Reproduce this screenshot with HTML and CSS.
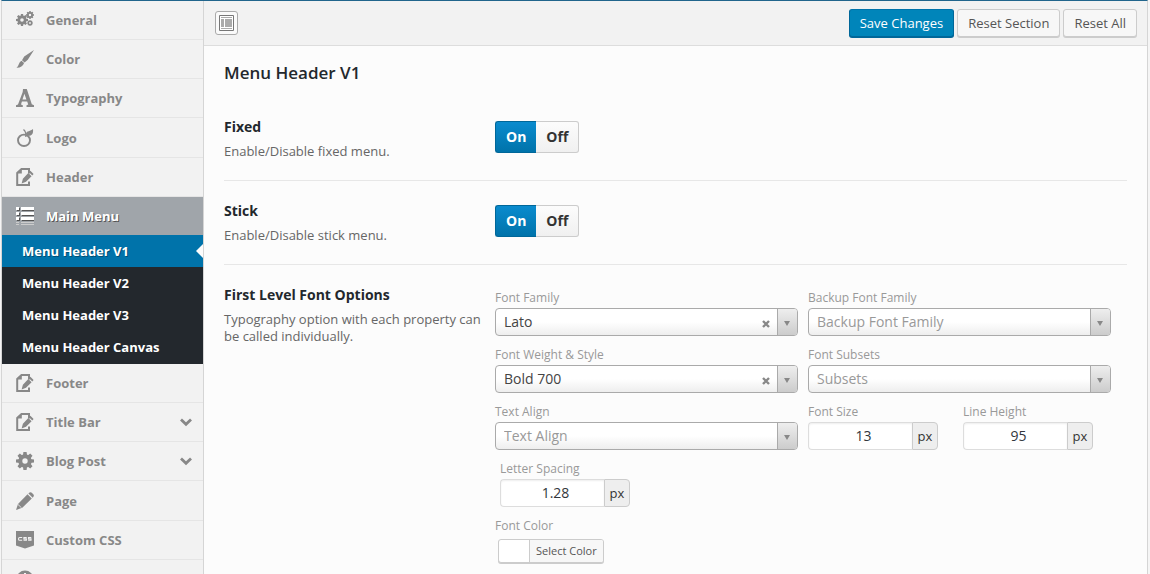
FILE: index.html
```html
<!DOCTYPE html>
<html lang="en">
<head>
<meta charset="utf-8">
<title>Theme Options</title>
<link rel="stylesheet" href="styles.css">
</head>
<body>
<svg class="sprite" aria-hidden="true">
  <symbol id="i-gear" viewBox="0 0 18 18">
    <circle cx="9" cy="9" r="4.7" fill="none" stroke="currentColor" stroke-width="4"/>
    <path fill="currentColor" d="M7.4 0h3.2l.5 4H6.9zM7.4 18h3.2l.5-4H6.9zM0 7.4v3.2l4 .5V6.9zM18 7.4v3.2l-4 .5V6.9zM1.5 3.8l2.3-2.3 3.2 2.4L3.900 7zM16.500 14.200l-2.300 2.300-3.200-2.400L14.100 11zM14.200 1.500l2.300 2.300L14.100 7 11 3.900zM3.800 16.500l-2.300-2.300L3.900 11 7 14.100z"/>
  </symbol>
  <symbol id="i-edit" viewBox="0 0 18 18">
    <path d="M13 5.500V1H5.500L1.200 5v12H13v-3.500" fill="none" stroke="currentColor" stroke-width="2"/>
    <path d="M1 5.500h4.800V1z" fill="currentColor"/>
    <path d="M14.400 2.800l3.200 3.100-1.300 1.600-3.300-3.200zM12.300 5l3.300 3.200-5.600 5.500-4.400 1.700 1.300-4.700z" fill="currentColor"/>
  </symbol>
  <symbol id="i-down" viewBox="0 0 12 9">
    <path d="M1 1.500l5 4.800 5-4.800" fill="none" stroke="currentColor" stroke-width="2.800"/>
  </symbol>
</svg>
<div class="page">
  <nav class="sidebar" aria-label="Sections">
    <ul class="menu">
      <li><a href="#general"><svg class="icon" viewBox="0 0 18 18"><use href="#i-gear" x="0" y="3" width="12" height="12"/><use href="#i-gear" x="10" y="0" width="8" height="8"/><use href="#i-gear" x="11" y="9" width="6" height="6"/></svg>General</a></li>
      <li><a href="#color"><svg class="icon" viewBox="0 0 18 18" fill="currentColor"><path d="M18 0L8.200 6.600 6 10.200l2.600 2.300 3.200-2.800zM5.500 10.700l2.600 2.400C7 16.500 4 18 .5 17.800 3 16 2.500 12.500 5.500 10.700z"/></svg>Color</a></li>
      <li><a href="#typography"><svg class="icon" viewBox="0 0 18 18" fill="currentColor" fill-rule="evenodd"><path d="M7 0h3.800l5 15.300 2.200.9V18h-7.500v-1.700l1.700-.8-1-3H5.900L5 15.400l1.800.9V18H0v-1.700l2-.9L6.700 3zM8.400 4.800L6.500 10.600h3.900z"/></svg>Typography</a></li>
      <li class="group"><a href="#logo"><svg class="icon" viewBox="0 0 18 18"><ellipse cx="8" cy="11.300" rx="6" ry="5.700" fill="none" stroke="currentColor" stroke-width="1.900"/><path d="M7.500.500Q10.500 3 9.800 8" fill="none" stroke="currentColor" stroke-width="1.300"/><path d="M17 0c.6 5-1.500 7.200-4.800 6.700L9.900 5C10.500 1.500 14.500 2.500 17 0z" fill="currentColor"/></svg>Logo</a></li>
      <li><a href="#header"><svg class="icon"><use href="#i-edit"/></svg>Header</a></li>
      <li>
        <a class="current" href="#main-menu"><svg class="icon" viewBox="0 0 18 18"><path fill="#555" d="M1 1h3v3H1zM6 1h13v3H6zM1 6h3v3H1zM6 6h13v3H6zM1 11h3v3H1zM6 11h13v3H6z"/><path fill="#fff" d="M0 0h3v3H0zM5 0h13v3H5zM0 5h3v3H0zM5 5h13v3H5zM0 10h3v3H0zM5 10h13v3H5z"/><path fill="none" stroke="#ccc" d="M0 15.500h3M5 15.500h13M0 17.500h3M5 17.500h13"/></svg>Main Menu</a>
        <ul class="submenu">
          <li><a class="active" href="#v1">Menu Header V1</a></li>
          <li><a href="#v2">Menu Header V2</a></li>
          <li><a href="#v3">Menu Header V3</a></li>
          <li><a href="#canvas">Menu Header Canvas</a></li>
        </ul>
      </li>
      <li><a href="#footer"><svg class="icon"><use href="#i-edit"/></svg>Footer</a></li>
      <li><a href="#title-bar"><svg class="icon"><use href="#i-edit"/></svg>Title Bar<svg class="chevron"><use href="#i-down"/></svg></a></li>
      <li><a href="#blog-post"><svg class="icon"><use href="#i-gear"/></svg>Blog Post<svg class="chevron"><use href="#i-down"/></svg></a></li>
      <li class="group"><a href="#page"><svg class="icon" viewBox="0 0 18 18" fill="currentColor"><path d="M11.500 2.200l4.300 4.200L6.300 15.800 0 18l2-6.100zM12.400 1.500C14 0 15 0 16.300 1.200l.7.700c1.300 1.300 1.200 2.300-.3 3.800z"/><path d="M2 12.500l3.500 3.300" stroke="#f2f2f2" stroke-width=".8"/></svg>Page</a></li>
      <li><a href="#css"><svg class="icon" viewBox="0 0 18 18"><path fill="currentColor" d="M0 0h18v14.500L9 17.500l-9-3z"/><path fill="none" stroke="#f2f2f2" stroke-width="1.100" d="M6.200 6.500H3.800q-1.300 0-1.300 1.400t1.300 1.400h2.400M10.700 6.500H7.900v1.400h2.500v1.400H7.500M15.300 6.500h-2.800v1.400H15v1.400h-2.900"/></svg>Custom CSS</a></li>
      <li><a href="#more" aria-label="More"><svg class="icon" viewBox="0 0 18 18"><circle cx="9" cy="9" r="8.500" fill="currentColor"/><path fill="#f2f2f2" d="M8 3h2v2H8zM8 7h2v7H8z"/></svg></a></li>
    </ul>
  </nav>
  <main class="main">
    <header class="toolbar">
      <button class="expand" type="button" aria-label="Expand options">
        <svg viewBox="0 0 15 16"><path fill="#fff" stroke="#777" d="M.5.500h14v15H.5z"/><path fill="#aaa" d="M2 2h11v1H2zM2 4h3v8H2zM6 4h7v8H6zM2 13h11v1H2z"/></svg>
      </button>
      <div class="actions">
        <button class="btn primary" type="button">Save Changes</button>
        <button class="btn" type="button">Reset Section</button>
        <button class="btn" type="button">Reset All</button>
      </div>
    </header>
    <form class="content">
      <h1>Menu Header V1</h1>
      <section class="option">
        <div class="info"><h2>Fixed</h2><p>Enable/Disable fixed menu.</p></div>
        <div class="switch">
          <label><input type="radio" name="fixed" checked><span>On</span></label>
          <label><input type="radio" name="fixed"><span>Off</span></label>
        </div>
      </section>
      <section class="option">
        <div class="info"><h2>Stick</h2><p>Enable/Disable stick menu.</p></div>
        <div class="switch">
          <label><input type="radio" name="stick" checked><span>On</span></label>
          <label><input type="radio" name="stick"><span>Off</span></label>
        </div>
      </section>
      <section class="option">
        <div class="info"><h2>First Level Font Options</h2><p>Typography option with each property can be called individually.</p></div>
        <div class="fields">
          <div class="field">
            <label for="family">Font Family</label>
            <div class="select"><select id="family"><option>Lato</option></select><button class="clear" type="button" aria-label="Clear font family"><svg viewBox="0 0 8 8"><path d="M1 1l6 6M7 1L1 7"/></svg></button></div>
          </div>
          <div class="field">
            <label for="backup">Backup Font Family</label>
            <div class="select"><select class="empty" id="backup"><option>Backup Font Family</option></select></div>
          </div>
          <div class="field">
            <label for="weight">Font Weight &amp; Style</label>
            <div class="select"><select id="weight"><option>Bold 700</option></select><button class="clear" type="button" aria-label="Clear font weight"><svg viewBox="0 0 8 8"><path d="M1 1l6 6M7 1L1 7"/></svg></button></div>
          </div>
          <div class="field">
            <label for="subsets">Font Subsets</label>
            <div class="select"><select class="empty" id="subsets"><option>Subsets</option></select></div>
          </div>
          <div class="field">
            <label for="align">Text Align</label>
            <div class="select"><select class="empty" id="align"><option>Text Align</option></select></div>
          </div>
          <div class="pair">
            <div class="field">
              <label for="size">Font Size</label>
              <div class="unit"><input id="size" type="text" value="13"><span>px</span></div>
            </div>
            <div class="field">
              <label for="line">Line Height</label>
              <div class="unit"><input id="line" type="text" value="95"><span>px</span></div>
            </div>
          </div>
          <div class="field spacing">
            <label for="spacing">Letter Spacing</label>
            <div class="unit"><input id="spacing" type="text" value="1.28"><span>px</span></div>
          </div>
          <div class="field color">
            <label for="color">Font Color</label>
            <button class="picker" id="color" type="button"><span>Select Color</span></button>
          </div>
        </div>
      </section>
    </form>
  </main>
</div>
</body>
</html>
```
FILE: styles.css
```css
* { box-sizing: border-box; }

body {
  margin: 0;
  background: #f5f5f5;
  color: #555;
  font: 13px/18px "Open Sans", sans-serif;
}

button, input, select { font-family: inherit; }
ul { list-style: none; margin: 0; padding: 0; }
h1, h2, p { margin: 0; }
.sprite { display: none; }

.page {
  display: flex;
  height: 100vh;
  margin: 0 2px 0 1px;
  overflow: hidden;
  border: 1px solid #d5d5d5;
  border-top-color: #21658c;
  border-bottom: 0;
  background: #fcfcfc;
}

/* Sidebar */
.sidebar {
  flex: none;
  width: 202px;
  border-right: 1px solid #d5d5d5;
  background: #f2f2f2;
}

.menu > li > a {
  display: flex;
  align-items: center;
  gap: 12px;
  height: 39px;
  padding: 0 11px 0 14px;
  border-bottom: 1px solid #e5e5e5;
  color: #888;
  font-weight: 700;
  text-decoration: none;
}

.icon { flex: none; width: 18px; height: 18px; }
.chevron { width: 12px; height: 9px; margin-left: auto; }

.menu > .group { padding-top: 1px; }

.menu > li > .current {
  height: 38px;
  border-bottom: 0;
  background: #a0a5aa;
  color: #fff;
  text-shadow: 1px 1px #555;
}

.submenu { padding-bottom: 1px; background: #23282d; }

.submenu a {
  display: block;
  position: relative;
  padding: 0 20px;
  color: #fff;
  font-weight: 700;
  line-height: 32px;
  text-decoration: none;
}

.submenu .active { background: #0073aa; text-shadow: 1px 1px #004f75; }

.submenu .active::after {
  content: "";
  position: absolute;
  top: 9px;
  right: 0;
  border: 7px solid transparent;
  border-right-color: #fcfcfc;
  border-left: 0;
}

/* Toolbar */
.main { flex: 1; min-width: 0; }

.toolbar {
  display: flex;
  align-items: center;
  justify-content: space-between;
  height: 45px;
  padding: 0 10px 0 11px;
  border-bottom: 1px solid #ddd;
  background: #f2f2f2;
}

.expand {
  display: grid;
  place-items: center;
  width: 23px;
  height: 24px;
  padding: 0;
  border: 1px solid #aaa;
  border-radius: 3px;
  background: #fafafa;
}

.expand svg { width: 15px; height: 16px; }
.actions { display: flex; gap: 3px; }

.btn {
  height: 28px;
  padding: 0 10px;
  border: 1px solid #ccc;
  border-radius: 3px;
  background: #f7f7f7;
  box-shadow: 0 1px 0 #ccc;
  color: #555;
  font-size: 13px;
}

.btn.primary {
  border-color: #0073aa #006799 #006799;
  background: #0085ba;
  box-shadow: 0 1px 0 #006799;
  color: #fff;
}

/* Options */
.content { padding: 15px 20px 0; }

h1 { padding-bottom: 12px; color: #23282d; font-size: 17px; font-weight: 600; line-height: 24px; }

.option {
  display: flex;
  align-items: flex-start;
  min-height: 84px;
  border-bottom: 1px solid #e7e7e7;
}

.option:last-child { border-bottom: 0; }

.info { flex: none; width: 271px; padding: 20px 10px 0 0; }
h2 { color: #23282d; font-size: 14px; font-weight: 700; line-height: 19px; }
.info p { padding-top: 7px; color: #666; line-height: 17px; }

.switch { display: flex; padding-top: 24px; }
.switch label { position: relative; }
.switch input { position: absolute; opacity: 0; }

.switch span {
  display: block;
  padding: 0 10px;
  border: 1px solid #ccc;
  border-left: 0;
  border-radius: 0 3px 3px 0;
  background: linear-gradient(#fcfcfc, #f0f0f0);
  color: #333;
  font-size: 14px;
  font-weight: 700;
  line-height: 30px;
}

.switch label:first-child span {
  border: 1px solid #006799;
  border-right: 0;
  border-radius: 3px 0 0 3px;
}

.switch :checked + span { background: linear-gradient(#0a8bce, #0073aa); color: #fff; }

.fields {
  flex: 1;
  display: grid;
  grid-template-columns: 1fr 1fr;
  gap: 9px 10px;
  padding: 23px 16px 0 0;
}

.field > label { display: block; color: #999; font-size: 12px; line-height: 20px; }
.select { position: relative; }

.select select {
  display: block;
  width: 100%;
  height: 28px;
  padding: 0 40px 2px 8px;
  appearance: none;
  border: 1px solid #aaa;
  border-radius: 4px;
  background: linear-gradient(#fff 50%, #eee);
  color: #444;
  font-size: 14px;
}

.select .empty { color: #999; }

.select::before {
  content: "";
  position: absolute;
  inset: 1px 1px 1px auto;
  width: 19px;
  border-left: 1px solid #aaa;
  border-radius: 0 3px 3px 0;
  background: linear-gradient(#eee, #ccc);
  pointer-events: none;
}

.select::after {
  content: "";
  position: absolute;
  top: 13px;
  right: 8px;
  border: 3px solid transparent;
  border-top: 5px solid #888;
  border-bottom: 0;
  pointer-events: none;
}

.clear {
  display: grid;
  place-items: center;
  position: absolute;
  top: 10px;
  right: 26px;
  width: 12px;
  height: 12px;
  padding: 0;
  border: 0;
  background: none;
}

.clear svg { width: 8px; height: 8px; fill: none; stroke: #888; stroke-width: 2.400; }

.pair { display: flex; gap: 25px; }
.unit { display: flex; width: 130px; }

.unit input {
  flex: 1;
  min-width: 0;
  height: 28px;
  padding: 0 8px 2px 14px;
  border: 1px solid #ddd;
  border-right: 0;
  border-radius: 4px 0 0 4px;
  background: #fff;
  box-shadow: inset 0 1px 2px #eee;
  color: #32373c;
  font-size: 14px;
  text-align: center;
}

.unit span {
  width: 26px;
  border: 1px solid #ccc;
  border-radius: 0 4px 4px 0;
  background: #eee;
  color: #333;
  line-height: 26px;
  text-align: center;
}

.spacing { grid-column: 1 / -1; padding-left: 5px; }
.color { grid-column: 1 / -1; }

.picker {
  display: block;
  height: 24px;
  margin: 3px;
  padding: 0 0 0 30px;
  overflow: hidden;
  border: 1px solid #ccc;
  border-radius: 3px;
  background: #fff;
  box-shadow: 0 1px 0 #ccc;
  color: #555;
  font-size: 11px;
}

.picker span {
  display: block;
  padding: 0 6px;
  border-left: 1px solid #ccc;
  background: #f7f7f7;
  line-height: 22px;
}
```
